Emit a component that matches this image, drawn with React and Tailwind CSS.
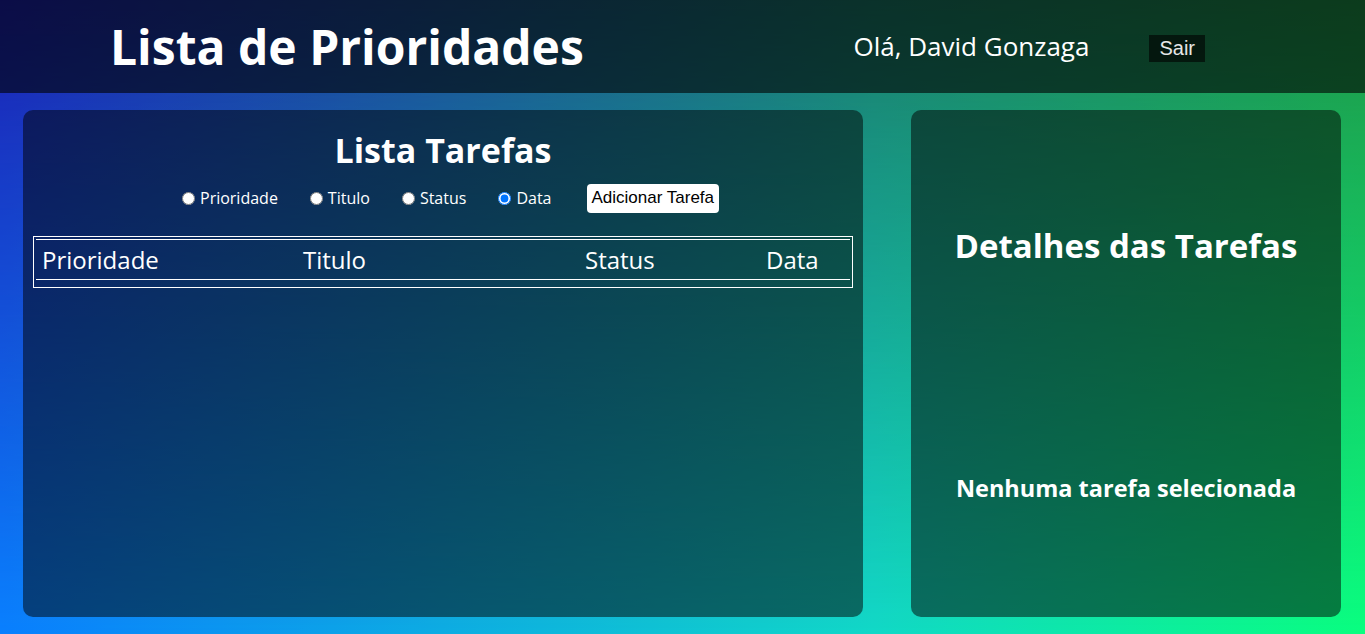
import { useState } from 'react';

const SORTS = ['Prioridade', 'Titulo', 'Status', 'Data'];

export default function App() {
  const [sort, setSort] = useState('Data');

  return (
    <div className="relative isolate min-h-screen flex flex-col font-['Open_Sans','Noto_Sans',sans-serif] text-white bg-[linear-gradient(to_right,#0a80ff,#12d9c8_64%,#0aff80)] before:absolute before:inset-0 before:-z-10 before:content-[''] before:bg-[linear-gradient(to_right,#1d20b2,#1b7c6a_64%,#1f9648)] before:[mask-image:linear-gradient(to_bottom,black,transparent)]">
      {/* Header */}
      <header className="h-[93px] flex items-center bg-black/60 pl-[110px] pr-[160px]">
        <h1 className="text-[48px] font-bold leading-none">Lista de Prioridades</h1>
        <span className="ml-auto text-[26px]">Olá, David Gonzaga</span>
        <button className="ml-[60px] mt-[3px] bg-black/60 px-[10px] h-[27px] text-[20px] leading-none font-['Liberation_Sans',sans-serif] text-white/90">
          Sair
        </button>
      </header>

      <main className="flex-1 flex gap-[48px] px-[23px] pt-[17px] pb-[17px]">
        {/* Task list */}
        <section className="w-[840px] rounded-[10px] bg-black/50 flex flex-col">
          <h2 className="mt-[20px] text-center text-[34px] leading-[40px] font-bold">Lista Tarefas</h2>
          <div className="mt-[13px] h-[30px] flex items-center gap-[32px] pl-[159px] text-[16px]">
            {SORTS.map((s) => (
              <label key={s} className="flex items-center gap-[5px] cursor-pointer">
                <input
                  type="radio"
                  name="sort"
                  checked={sort === s}
                  onChange={() => setSort(s)}
                  className="w-[13px] h-[13px] m-0"
                />
                {s}
              </label>
            ))}
            <button className="ml-[3px] bg-white text-black rounded-[4px] px-[5px] h-[29px] text-[17px] font-['Liberation_Sans',sans-serif]">
              Adicionar Tarefa
            </button>
          </div>

          <div className="mt-[23px] mx-[10px] border border-white p-[2px] pb-[7px]">
            <div className="flex border-y border-white h-[41px] items-center text-[24px]">
              <span className="w-[267px] pl-[6px]">Prioridade</span>
              <span className="w-[282px]">Titulo</span>
              <span className="w-[181px]">Status</span>
              <span>Data</span>
            </div>
          </div>
        </section>

        {/* Details */}
        <section className="w-[430px] rounded-[10px] bg-black/50 flex flex-col items-center">
          <h2 className="mt-[116px] text-[33px] leading-[40px] font-bold">Detalhes das Tarefas</h2>
          <p className="mt-[207px] text-[23.5px] leading-[30px] font-bold">Nenhuma tarefa selecionada</p>
        </section>
      </main>
    </div>
  );
}
